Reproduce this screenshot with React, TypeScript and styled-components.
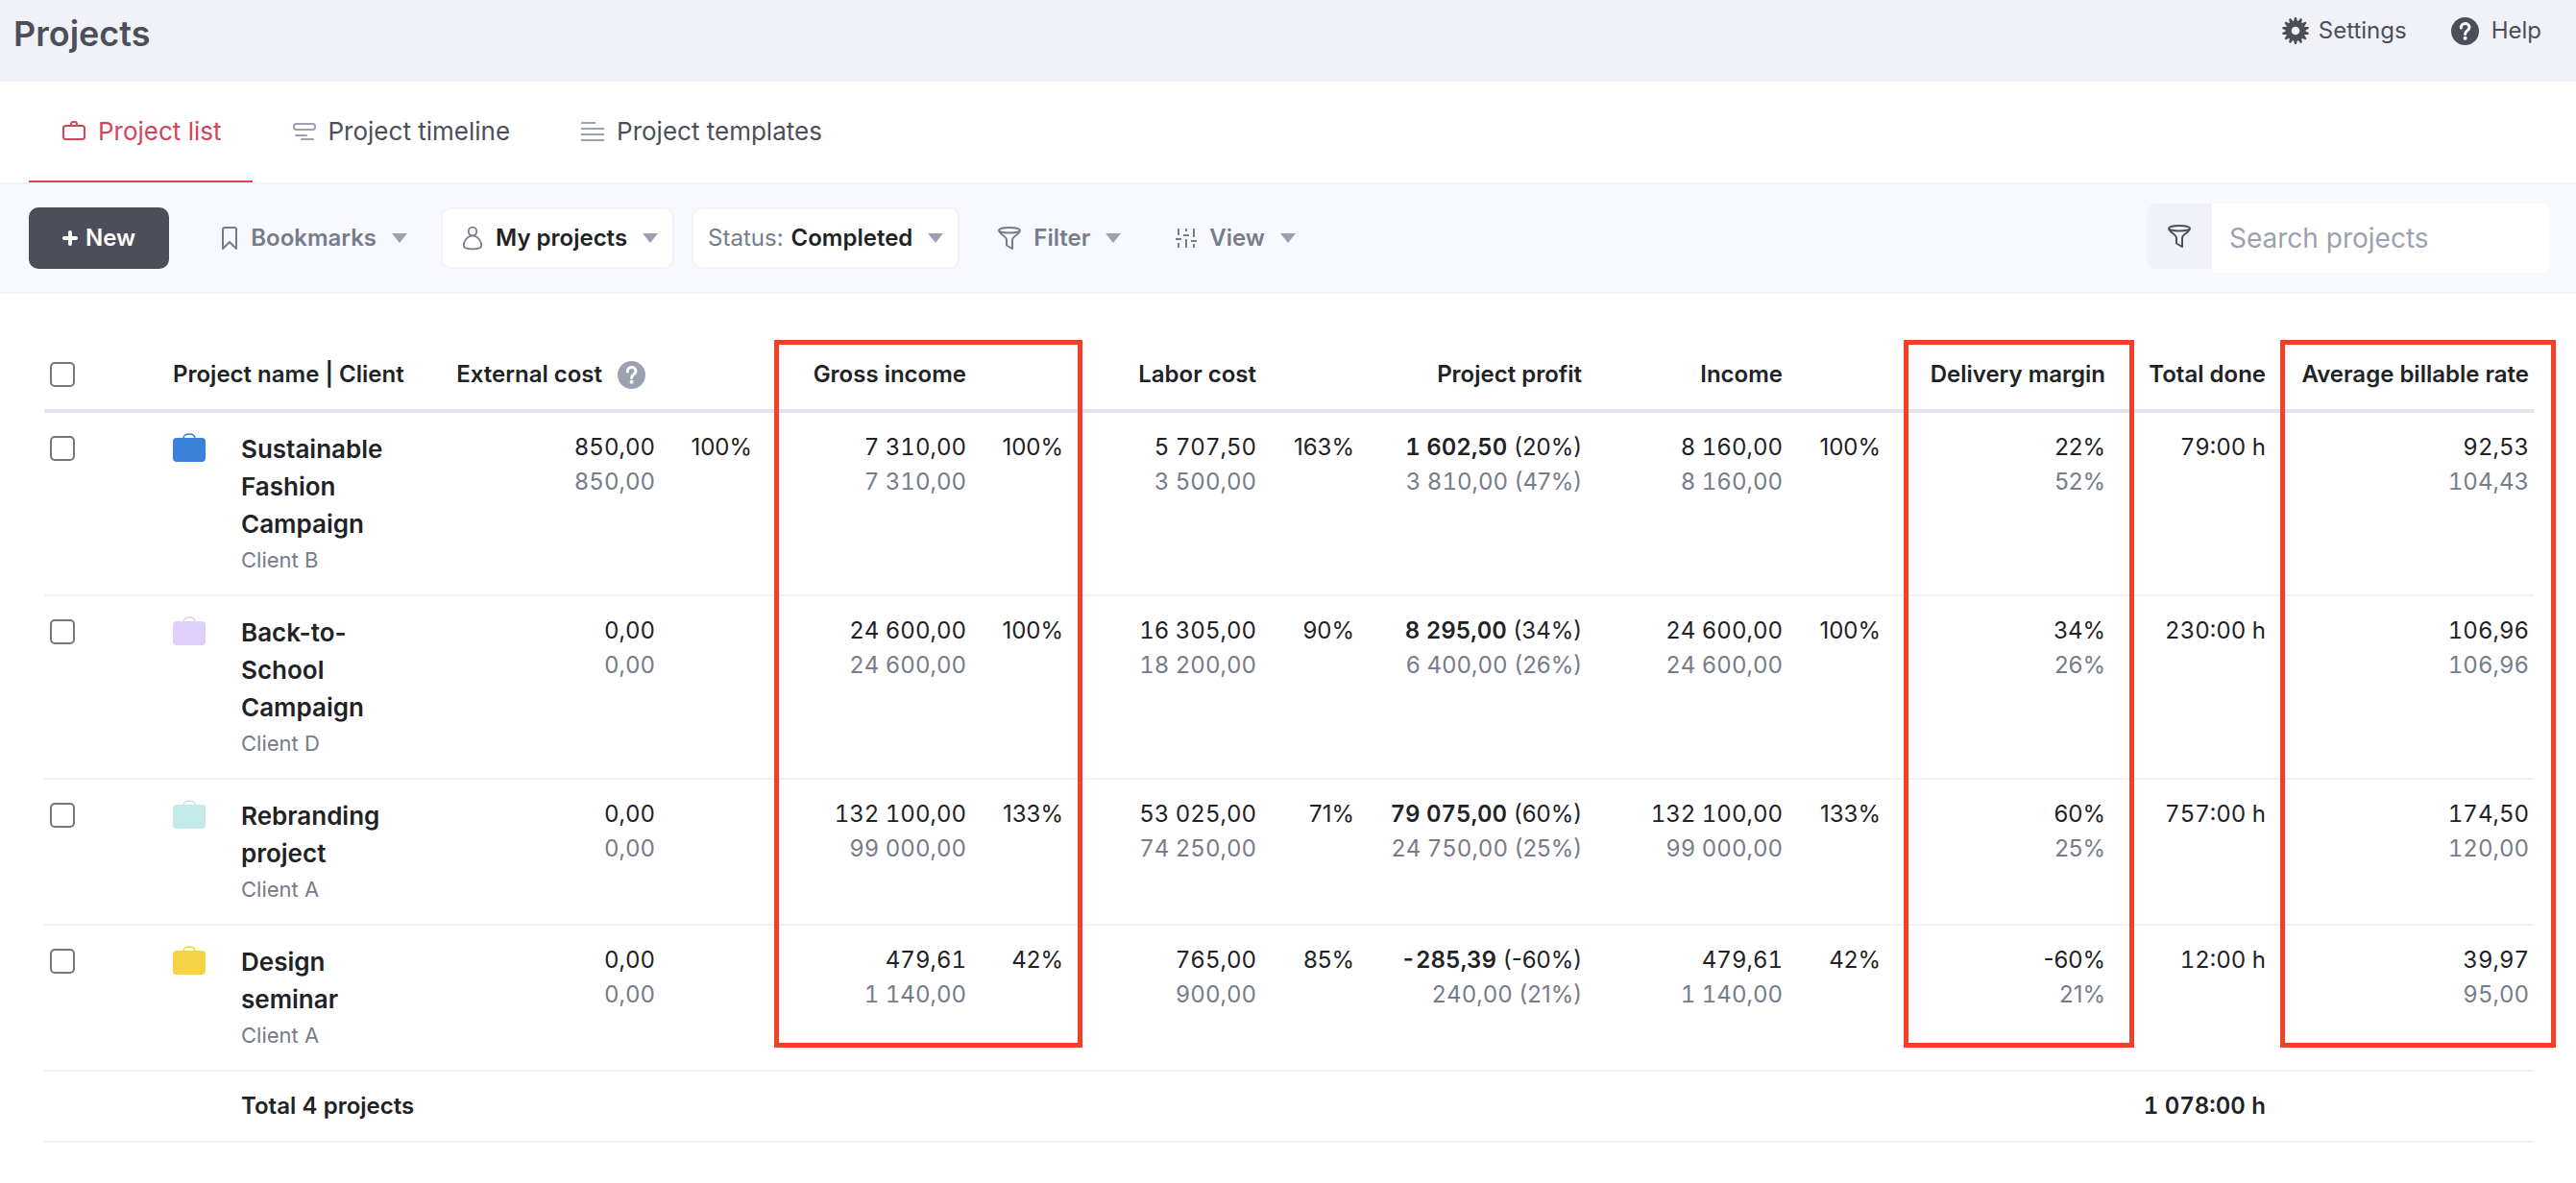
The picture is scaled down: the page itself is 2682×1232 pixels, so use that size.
import React from "react";
import styled, { createGlobalStyle } from "styled-components";

const GlobalStyle = createGlobalStyle`
  *, *::before, *::after { box-sizing: border-box; }
  body { margin: 0; background: #ffffff; color: #212226; font-family: Inter, "Liberation Sans", sans-serif; font-size: 24px; line-height: 36px; }
  button, input { font: inherit; }
`;

const TopBar = styled.header`
  display: flex; justify-content: space-between; align-items: flex-start;
  height: 85px; padding: 0 36px 0 14px; background: #f1f2f8; color: #4c4f59;
`;
const Title = styled.h1`margin: 0; padding-top: 16px; font-size: 36px; line-height: 38px; font-weight: 600;`;
const TopLinks = styled.nav`display: flex; gap: 46px; padding-top: 14px;`;
const TopLink = styled.a<{ $gap: number }>`
  display: flex; align-items: center; gap: ${(p) => p.$gap}px; color: inherit; text-decoration: none;
`;

const Tabs = styled.nav`
  display: flex; gap: 7px; height: 107px; padding: 0 30px; background: #ffffff; border-bottom: 2px solid #f1f2f8;
`;
const Tab = styled.a<{ $active?: boolean }>`
  display: flex; align-items: center; gap: 12px; padding: 0 32px 0 34px; font-size: 26px; text-decoration: none;
  color: ${(p) => (p.$active ? "#d14659" : "#4c4f59")};
  border-bottom: 2px solid ${(p) => (p.$active ? "#d14659" : "transparent")};
  svg { color: ${(p) => (p.$active ? "#d14659" : "#9ba1b0")}; }
`;

const Toolbar = styled.div`
  display: flex; align-items: flex-start; justify-content: space-between;
  height: 114px; padding: 20px 28px 0 30px; background: #f8f9fe; border-bottom: 2px solid #f1f2f8;
`;
const Actions = styled.div`display: flex; gap: 18px; padding-top: 4px;`;
const ToolButton = styled.button<{ $kind: "dark" | "plain" | "box" }>`
  display: flex; align-items: center; height: 64px; border-radius: 10px; font-weight: 600; white-space: nowrap;
  border: 2px solid ${(p) => (p.$kind === "dark" ? "#4c4f59" : p.$kind === "box" ? "#f1f2f8" : "transparent")};
  background: ${(p) => (p.$kind === "dark" ? "#4c4f59" : p.$kind === "box" ? "#ffffff" : "transparent")};
  color: ${(p) => (p.$kind === "dark" ? "#ffffff" : p.$kind === "box" ? "#212226" : "#767c8c")};
  padding: ${(p) => (p.$kind === "dark" ? "0 33px" : "0 15px")};
  margin-right: ${(p) => (p.$kind === "dark" ? 14 : 0)}px;
  gap: ${(p) => (p.$kind === "dark" ? 8 : 13)}px;
  svg { color: ${(p) => (p.$kind === "dark" ? "#ffffff" : "#767c8c")}; margin-left: ${(p) => (p.$kind === "dark" ? 0 : 5)}px; }
`;
const StatusText = styled.span`display: flex; gap: 8px;`;
const Muted = styled.span`color: #767c8c; font-weight: 400;`;
const Caret = styled.span`
  margin-left: 3px; border: 8px solid transparent; border-top: 10px solid #9ba1b0; border-bottom: 0;
`;
const Search = styled.div`display: flex; align-items: flex-start;`;
const SearchFilter = styled.button`
  display: flex; align-items: center; justify-content: center; width: 68px; height: 68px; border: 0; padding: 0;
  border-radius: 10px 0 0 10px; background: #f1f2f8; color: #4c4f59;
`;
const SearchInput = styled.input`
  width: 351px; height: 72px; padding: 0 18px; border: 0; border-radius: 0 10px 10px 0; background: #ffffff; font-size: 28px;
  &::placeholder { color: #9ba1b0; opacity: 1; }
`;

const Content = styled.main`padding: 48px 44px 40px 46px;`;
const TableArea = styled.div`position: relative;`;
const Table = styled.table`width: 100%; table-layout: fixed; border-collapse: separate; border-spacing: 0;`;
const Head = styled.th<{ $left?: boolean }>`
  height: 76px; padding: 0 5px; border-bottom: 4px solid #e2e3ee; font-weight: 600; white-space: nowrap;
  text-align: ${(p) => (p.$left ? "left" : "right")};
  ${(p) => (p.$left ? "padding-left: 0;" : "")}
`;
const CheckHead = styled(Head)`padding-left: 6px;`;
const HeadWithHelp = styled.span`
  display: flex; align-items: center; justify-content: flex-end; gap: 16px; padding-right: 10px;
  svg { color: #9ba1b0; }
`;
const Cell = styled.td`
  padding: 18px 5px; vertical-align: top; text-align: right; border-bottom: 2px solid #f1f2f8; white-space: nowrap;
`;
const NumberCell = styled(Cell)`font-variant-numeric: tabular-nums;`;
const CheckCell = styled(Cell)`padding: 24px 6px 0; text-align: left; line-height: 0;`;
const IconCell = styled(Cell)`padding: 20px 0 0; text-align: left; line-height: 0;`;
const NameCell = styled(Cell)`padding: 18px 6px 18px 0; text-align: left; white-space: normal;`;
const ProjectLink = styled.a`display: block; font-size: 26px; line-height: 39px; font-weight: 600; color: inherit; text-decoration: none;`;
const Client = styled.div`font-size: 22px; line-height: 36px; color: #767c8c;`;
const Plan = styled.div`color: #767c8c;`;
const Tabular = styled.span<{ $strong?: boolean }>`
  font-variant-numeric: tabular-nums; font-weight: ${(p) => (p.$strong ? 600 : 400)};
`;
const FootCell = styled(NumberCell)<{ $left?: boolean }>`
  font-weight: 600; text-align: ${(p) => (p.$left ? "left" : "right")};
  ${(p) => (p.$left ? "padding-left: 0;" : "")}
`;
const Checkbox = styled.input`
  appearance: none; display: block; width: 26px; height: 26px; margin: 0; border: 2px solid #767676; border-radius: 5px; background: #ffffff;
  &:checked { background: #d14659; border-color: #d14659; }
`;
const Highlight = styled.div<{ $from: number; $to: number }>`
  position: absolute; top: 0; bottom: 99px; pointer-events: none; border: 5px solid #ee4126;
  left: ${(p) => (p.$from / 2592) * 100}%; width: ${(p) => ((p.$to - p.$from) / 2592) * 100}%;
`;

const Gear = () => (
  <svg width="28" height="28" viewBox="0 0 28 28" aria-hidden="true">
    {Array.from({ length: 14 }, (_, i) => (
      <path key={i} d="M11.4 6 L13.1 0 H14.9 L16.6 6 Z" fill="currentColor" transform={`rotate(${(i * 360) / 14} 14 14)`} />
    ))}
    <circle cx="14" cy="14" r="7.3" fill="none" stroke="currentColor" strokeWidth="6" />
  </svg>
);
const HelpIcon = () => (
  <svg width="29" height="29" viewBox="0 0 29 29" aria-hidden="true">
    <circle cx="14.5" cy="14.5" r="14.5" fill="currentColor" />
    <path d="M10.3 11 C10.3 5.2 19 5.2 19 10.6 C19 14 14.6 13.8 14.6 17.4" fill="none" stroke="#fff" strokeWidth="3" strokeLinecap="round" />
    <circle cx="14.6" cy="21.8" r="2" fill="#fff" />
  </svg>
);
const BagOutline = () => (
  <svg width="26" height="22" viewBox="0 0 26 22" fill="none" stroke="currentColor" strokeWidth="2" aria-hidden="true">
    <rect x="2" y="5" width="22" height="14" rx="2.5" />
    <path d="M10 5 V4 Q10 1 12 1 H14 Q16 1 16 4 V5" />
  </svg>
);
const BagSolid = ({ color }: { color: string }) => (
  <svg width="34" height="32" viewBox="0 0 34 32" aria-hidden="true">
    <rect y="6" width="34" height="25" rx="4" fill={color} />
    <path d="M11 7 Q11 2 17 2 Q23 2 23 7" fill="none" stroke={color} strokeWidth="1.6" />
  </svg>
);
const Timeline = () => (
  <svg width="26" height="20" viewBox="0 0 26 20" fill="none" stroke="currentColor" strokeWidth="2" aria-hidden="true">
    <rect x="2" y="2" width="22" height="6" rx="2.5" />
    <path d="M4 14 H15 M10 18 H22" strokeLinecap="round" />
  </svg>
);
const Lines = () => (
  <svg width="26" height="22" viewBox="0 0 26 22" fill="none" stroke="currentColor" strokeWidth="2" aria-hidden="true">
    <path d="M1 2 H16 M1 8 H25 M1 14 H25 M1 20 H25" />
  </svg>
);
const Plus = () => (
  <svg width="16" height="16" viewBox="0 0 16 16" aria-hidden="true">
    <path d="M8 2 V14 M2 8 H14" stroke="currentColor" strokeWidth="4" strokeLinecap="round" />
  </svg>
);
const Bookmark = () => (
  <svg width="18" height="26" viewBox="0 0 18 26" fill="none" stroke="currentColor" strokeWidth="2" strokeLinejoin="round" aria-hidden="true">
    <path d="M2 24 V4 Q2 2 4 2 H14 Q16 2 16 4 V24 L9 17 Z" />
  </svg>
);
const Person = () => (
  <svg width="22" height="26" viewBox="0 0 22 26" fill="none" stroke="currentColor" strokeWidth="1.8" aria-hidden="true">
    <circle cx="11" cy="6" r="4.3" />
    <path d="M11 10.3 C6 10.3 1.8 16 1.8 20.5 C1.8 23.5 5 24.3 11 24.3 S20.2 23.5 20.2 20.5 C20.2 16 16 10.3 11 10.3 Z" />
  </svg>
);
const Funnel = () => (
  <svg width="24" height="26" viewBox="1 0 24 26" fill="none" stroke="currentColor" strokeWidth="2" strokeLinejoin="round" aria-hidden="true">
    <ellipse cx="13" cy="4.8" rx="11" ry="2.8" />
    <path d="M2 5.5 Q4 9 8 11.5 Q10 13 10 15 V20.5 L16 24 V15 Q16 13 18 11.5 Q22 9 24 5.5" />
  </svg>
);
const Sliders = () => (
  <svg width="22" height="20" viewBox="0 0 22 20" fill="none" stroke="currentColor" strokeWidth="2" aria-hidden="true">
    <path d="M3 0 V7 M0 11 H6 M3 15 V20 M11 0 V3 M8 7 H14 M11 11 V20 M19 0 V9 M16 13 H22 M19 16 V20" />
  </svg>
);

type Pair = [string, string];
type Profit = { value: string; share: string; plan: string; planShare: string };
type Project = {
  name: string; client: string; color: string; cost: Pair; costPct: string; gross: Pair; grossPct: string;
  labor: Pair; laborPct: string; profit: Profit; income: Pair; incomePct: string;
  margin: Pair; done: string; rate: Pair;
};
const projects: Project[] = [
  {
    name: "Sustainable Fashion Campaign", client: "Client B", color: "#3a82d9",
    cost: ["850,00", "850,00"], costPct: "100%", gross: ["7 310,00", "7 310,00"], grossPct: "100%",
    labor: ["5 707,50", "3 500,00"], laborPct: "163%",
    profit: { value: "1 602,50", share: "(20%)", plan: "3 810,00", planShare: "(47%)" },
    income: ["8 160,00", "8 160,00"], incomePct: "100%", margin: ["22%", "52%"], done: "79:00 h", rate: ["92,53", "104,43"],
  },
  {
    name: "Back-to-School Campaign", client: "Client D", color: "#dfcffb",
    cost: ["0,00", "0,00"], costPct: "", gross: ["24 600,00", "24 600,00"], grossPct: "100%",
    labor: ["16 305,00", "18 200,00"], laborPct: "90%",
    profit: { value: "8 295,00", share: "(34%)", plan: "6 400,00", planShare: "(26%)" },
    income: ["24 600,00", "24 600,00"], incomePct: "100%", margin: ["34%", "26%"], done: "230:00 h", rate: ["106,96", "106,96"],
  },
  {
    name: "Rebranding project", client: "Client A", color: "#c1eae8",
    cost: ["0,00", "0,00"], costPct: "", gross: ["132 100,00", "99 000,00"], grossPct: "133%",
    labor: ["53 025,00", "74 250,00"], laborPct: "71%",
    profit: { value: "79 075,00", share: "(60%)", plan: "24 750,00", planShare: "(25%)" },
    income: ["132 100,00", "99 000,00"], incomePct: "133%", margin: ["60%", "25%"], done: "757:00 h", rate: ["174,50", "120,00"],
  },
  {
    name: "Design seminar", client: "Client A", color: "#f5d344",
    cost: ["0,00", "0,00"], costPct: "", gross: ["479,61", "1 140,00"], grossPct: "42%",
    labor: ["765,00", "900,00"], laborPct: "85%",
    profit: { value: "-285,39", share: "(-60%)", plan: "240,00", planShare: "(21%)" },
    income: ["479,61", "1 140,00"], incomePct: "42%", margin: ["-60%", "21%"], done: "12:00 h", rate: ["39,97", "95,00"],
  },
];

const columns = [134, 71, 164, 272, 101, 223, 101, 201, 102, 237, 209, 102, 234, 167, 274];

const Amount = ({ pair }: { pair: Pair }) => (
  <NumberCell>{pair[0]}<Plan>{pair[1]}</Plan></NumberCell>
);

export default function App() {
  return (
    <>
      <GlobalStyle />
      <TopBar>
        <Title>Projects</Title>
        <TopLinks>
          <TopLink href="#settings" $gap={10}><Gear />Settings</TopLink>
          <TopLink href="#help" $gap={13}><HelpIcon />Help</TopLink>
        </TopLinks>
      </TopBar>
      <Tabs>
        <Tab href="#list" $active><BagOutline />Project list</Tab>
        <Tab href="#timeline"><Timeline />Project timeline</Tab>
        <Tab href="#templates"><Lines />Project templates</Tab>
      </Tabs>
      <Toolbar>
        <Actions>
          <ToolButton $kind="dark"><Plus />New</ToolButton>
          <ToolButton $kind="plain"><Bookmark />Bookmarks<Caret /></ToolButton>
          <ToolButton $kind="box"><Person />My projects<Caret /></ToolButton>
          <ToolButton $kind="box"><StatusText><Muted>Status:</Muted>Completed</StatusText><Caret /></ToolButton>
          <ToolButton $kind="plain"><Funnel />Filter<Caret /></ToolButton>
          <ToolButton $kind="plain"><Sliders />View<Caret /></ToolButton>
        </Actions>
        <Search>
          <SearchFilter aria-label="Filter search"><Funnel /></SearchFilter>
          <SearchInput type="text" placeholder="Search projects" aria-label="Search projects" />
        </Search>
      </Toolbar>
      <Content>
        <TableArea>
          <Table>
            <colgroup>{columns.map((w, i) => <col key={i} style={{ width: w }} />)}</colgroup>
            <thead>
              <tr>
                <CheckHead $left><Checkbox type="checkbox" aria-label="Select all projects" /></CheckHead>
                <Head $left colSpan={2}>Project name | Client</Head>
                <Head><HeadWithHelp>External cost<HelpIcon /></HeadWithHelp></Head>
                <Head />
                <Head>Gross income</Head>
                <Head />
                <Head>Labor cost</Head>
                <Head />
                <Head>Project profit</Head>
                <Head>Income</Head>
                <Head />
                <Head>Delivery margin</Head>
                <Head>Total done</Head>
                <Head>Average billable rate</Head>
              </tr>
            </thead>
            <tbody>
              {projects.map((p) => (
                <tr key={p.name}>
                  <CheckCell><Checkbox type="checkbox" aria-label={`Select ${p.name}`} /></CheckCell>
                  <IconCell><BagSolid color={p.color} /></IconCell>
                  <NameCell><ProjectLink href="#project">{p.name}</ProjectLink><Client>{p.client}</Client></NameCell>
                  <Amount pair={p.cost} />
                  <Cell>{p.costPct}</Cell>
                  <Amount pair={p.gross} />
                  <Cell>{p.grossPct}</Cell>
                  <Amount pair={p.labor} />
                  <Cell>{p.laborPct}</Cell>
                  <Cell>
                    <Tabular $strong>{p.profit.value}</Tabular> {p.profit.share}
                    <Plan><Tabular>{p.profit.plan}</Tabular> {p.profit.planShare}</Plan>
                  </Cell>
                  <Amount pair={p.income} />
                  <Cell>{p.incomePct}</Cell>
                  <Cell>{p.margin[0]}<Plan>{p.margin[1]}</Plan></Cell>
                  <NumberCell>{p.done}</NumberCell>
                  <Amount pair={p.rate} />
                </tr>
              ))}
            </tbody>
            <tfoot>
              <tr>
                <FootCell colSpan={2} />
                <FootCell $left colSpan={11}>Total 4 projects</FootCell>
                <FootCell>1 078:00 h</FootCell>
                <FootCell />
              </tr>
            </tfoot>
          </Table>
          <Highlight $from={760} $to={1081} />
          <Highlight $from={1936} $to={2176} />
          <Highlight $from={2328} $to={2615} />
        </TableArea>
      </Content>
    </>
  );
}
